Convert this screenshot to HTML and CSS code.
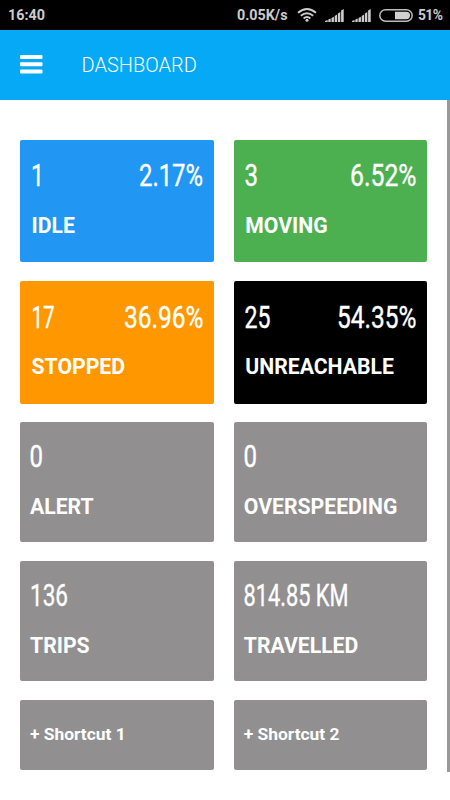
FILE: index.html
```html
<!DOCTYPE html>
<html lang="en">
<head>
<meta charset="utf-8">
<title>Dashboard</title>
<link rel="stylesheet" href="styles.css">
</head>
<body>
<div class="status">
  <span class="clock">16:40</span>
  <span class="speed">0.05K/s</span>
  <svg class="wifi" width="20" height="14" viewBox="0 0 20 14" fill="none" stroke="#ccc" stroke-width="1.9"><path d="M1 4.8Q10-2.8 19 4.8M3.8 7.7Q10 2.6 16.2 7.7M6.6 10.4Q10 7.6 13.4 10.4"/><circle cx="10" cy="12.2" r="1.5" fill="#ccc" stroke="none"/></svg>
  <svg class="signal" width="19" height="13" viewBox="0 0 19 13" fill="#ccc"><path d="M0 13v-1l2.6-1v2zM3.3 13v-2.6l2.4-1V13zM6.5 13V9l2.4-1.3V13zM9.7 13V7l2.4-1.6V13zM12.9 13V4.5L15.3 3v10zM16.1 13V1.5L18.7 0v13z"/></svg>
  <svg class="signal second" width="19" height="13" viewBox="0 0 19 13" fill="#ccc"><path d="M0 13v-1l2.6-1v2zM3.3 13v-2.6l2.4-1V13zM6.5 13V9l2.4-1.3V13zM9.7 13V7l2.4-1.6V13zM12.9 13V4.5L15.3 3v10zM16.1 13V1.5L18.7 0v13z"/></svg>
  <svg class="battery" width="34" height="13" viewBox="0 0 34 13"><rect x=".8" y=".8" width="32.4" height="11.4" rx="5.7" fill="none" stroke="#bbb" stroke-width="1.5"/><path d="M16 2.8h11.3a3.7 3.7 0 0 1 0 7.4H16z" fill="#d0d0d0"/></svg>
  <span class="percent">51%</span>
</div>
<header class="bar">
  <svg width="23" height="19" viewBox="0 0 23 19" fill="#fff"><rect width="22.5" height="4" rx="1"/><rect y="7.3" width="22.5" height="4" rx="1"/><rect y="14.4" width="22.5" height="4" rx="1"/></svg>
  <h1>DASHBOARD</h1>
</header>
<main class="content">
  <div class="grid">
    <section class="card idle">
      <div class="values">
        <svg width="12" height="30"><text x="-1" y="24" textLength="13" lengthAdjust="spacingAndGlyphs">1</text></svg>
        <svg width="64" height="30"><text x="0" y="24" textLength="64" lengthAdjust="spacingAndGlyphs">2.17%</text></svg>
      </div>
      <h2>IDLE</h2>
    </section>
    <section class="card moving">
      <div class="values">
        <svg width="14" height="30"><text x="-.5" y="24" textLength="13.5" lengthAdjust="spacingAndGlyphs">3</text></svg>
        <svg width="66" height="30"><text x="0" y="24" textLength="66.5" lengthAdjust="spacingAndGlyphs">6.52%</text></svg>
      </div>
      <h2>MOVING</h2>
    </section>
    <section class="card stopped">
      <div class="values">
        <svg width="26" height="30"><text x="-.5" y="24" textLength="23" lengthAdjust="spacingAndGlyphs">17</text></svg>
        <svg width="79" height="30"><text x="0" y="24" textLength="79.5" lengthAdjust="spacingAndGlyphs">36.96%</text></svg>
      </div>
      <h2>STOPPED</h2>
    </section>
    <section class="card unreachable">
      <div class="values">
        <svg width="27" height="30"><text x="-.5" y="24" textLength="26" lengthAdjust="spacingAndGlyphs">25</text></svg>
        <svg width="79" height="30"><text x="0" y="24" textLength="79.5" lengthAdjust="spacingAndGlyphs">54.35%</text></svg>
      </div>
      <h2>UNREACHABLE</h2>
    </section>
    <section class="card plain">
      <div class="values"><svg width="14" height="30"><text x="-.5" y="24" textLength="13.5" lengthAdjust="spacingAndGlyphs">0</text></svg></div>
      <h2>ALERT</h2>
    </section>
    <section class="card plain">
      <div class="values"><svg width="14" height="30"><text x="-.5" y="24" textLength="13.5" lengthAdjust="spacingAndGlyphs">0</text></svg></div>
      <h2>OVERSPEEDING</h2>
    </section>
    <section class="card plain">
      <div class="values"><svg width="40" height="30"><text x="0" y="24" textLength="38" lengthAdjust="spacingAndGlyphs">136</text></svg></div>
      <h2>TRIPS</h2>
    </section>
    <section class="card plain">
      <div class="values"><svg width="106" height="30"><text x="-.5" y="24" textLength="105" lengthAdjust="spacingAndGlyphs">814.85 KM</text></svg></div>
      <h2>TRAVELLED</h2>
    </section>
    <section class="card shortcut">+ Shortcut 1</section>
    <section class="card shortcut">+ Shortcut 2</section>
  </div>
  <div class="scrollbar"></div>
</main>
</body>
</html>
```

FILE: styles.css
```css
* { box-sizing: border-box; }
body {
  margin: 0;
  width: 450px;
  height: 800px;
  overflow: hidden;
  background: #fff;
  color: #fff;
  font-family: Roboto, sans-serif;
}
svg { display: block; flex: none; }
.status {
  display: flex;
  align-items: center;
  height: 29.5px;
  padding: 1px 7px 0 8px;
  background: #000;
  color: #ccc;
  font-size: 14.3px;
  font-weight: 700;
  white-space: nowrap;
}
.clock { flex: 1; }
.speed { width: 60px; }
.signal { margin-left: 8px; }
.battery { margin-left: 8px; }
.percent { width: 25px; margin-left: 5px; font-size: 13.8px; letter-spacing: -0.6px; }
.bar {
  display: flex;
  align-items: center;
  height: 70px;
  padding-left: 19.5px;
  background: #05a9f6;
}
.bar h1 {
  margin: 0 0 0 39px;
  font-size: 20px;
  font-weight: 300;
  line-height: 24px;
}
.content {
  display: flex;
  justify-content: space-between;
  height: 700.5px;
}
.grid {
  display: grid;
  grid-template-columns: 193.5px 193.5px;
  grid-template-rows: 122.5px 122.5px 120px 120px 70px;
  gap: 18.8px 20.3px;
  padding: 40.3px 0 0 20px;
  align-content: start;
}
.card {
  border-radius: 2px;
  padding: 22.5px 11px 0 11.5px;
}
.values {
  display: flex;
  justify-content: space-between;
}
.values svg {
  overflow: visible;
  fill: #fff;
  stroke: #fff;
  stroke-width: 0.4px;
  font-size: 32px;
  font-weight: 400;
}
.card h2 {
  margin: 20.6px 0 0;
  font-size: 21.2px;
  font-weight: 700;
  line-height: 25px;
}
.idle { background: #2196f3; }
.moving { background: #4caf50; }
.stopped { background: #ff9800; }
.unreachable { background: #000; }
.plain { background: #918f90; padding: 21px 10px 0; }
.shortcut {
  display: flex;
  align-items: center;
  padding: 0 10px 1.5px;
  background: #918f90;
  font-size: 17.4px;
  font-weight: 700;
}
.scrollbar {
  width: 2.6px;
  height: 672px;
  background: #999;
}
```
